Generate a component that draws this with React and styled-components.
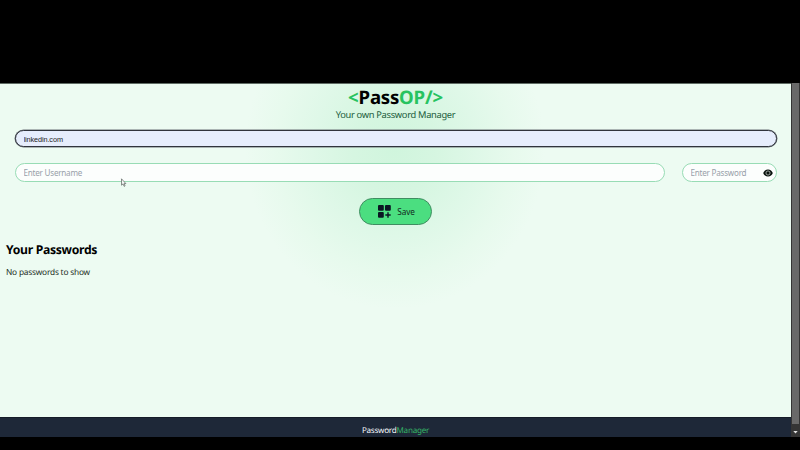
import React from "react";
import styled, { createGlobalStyle } from "styled-components";

const GlobalStyle = createGlobalStyle`
  * { box-sizing: border-box; }
  body { margin: 0; background: #000; overflow: hidden; }
  h1, h2, p { margin: 0; }
`;

const Screen = styled.div`
  width: 800px;
  height: 450px;
  padding: 83px 0 13px;
  display: flex;
  background: #000;
  font-family: "Noto Sans", "Open Sans", sans-serif;
  color: #000;
  text-rendering: geometricPrecision;
`;

const Page = styled.div`
  position: relative;
  width: 791px;
  height: 354px;
  border-top: 1px solid #5f6b64;
  display: flex;
  flex-direction: column;
  background: radial-gradient(ellipse 150px 160px at 395px 65px, #d0f5dd 0%, #d6f6e1 28%, #dff8e8 55%, #e7faed 78%, #edfbf2 100%);
`;

const Main = styled.main`
  flex: 1;
  display: flex;
  flex-direction: column;
`;

const Title = styled.h1`
  margin-top: 3px;
  height: 21px;
  line-height: 21px;
  text-align: center;
  font-size: 18.6px;
  font-weight: 700;
  letter-spacing: -0.2px;
`;

const Accent = styled.span`
  color: ${(p) => p.$color || "#27c360"};
`;

const Tagline = styled.p`
  height: 14px;
  line-height: 13px;
  text-align: center;
  font-size: 9.3px;
  letter-spacing: -0.3px;
  color: #205c3b;
`;

const Form = styled.form`
  display: flex;
  flex-direction: column;
  align-items: center;
  gap: 16px;
  padding: 7px 0 0;
`;

const Row = styled.div`
  width: 762px;
  display: flex;
  gap: 17px;
`;

const Field = styled.div`
  width: ${(p) => p.$width}px;
  height: ${(p) => (p.$active ? 17 : 19)}px;
  margin-top: ${(p) => (p.$active ? 1 : 0)}px;
  padding: 0 3px 0 8px;
  display: flex;
  align-items: center;
  justify-content: space-between;
  border: 1px solid ${(p) => (p.$active ? "#30343c" : "#98dcb5")};
  box-shadow: ${(p) => (p.$active ? "0 0 0 0.5px #6a7076" : "none")};
  border-radius: 10px;
  background: ${(p) => (p.$active ? "#e6edfc" : "#fcfefd")};
  svg { display: block; flex: none; }
`;

const Input = styled.input`
  flex: 1;
  min-width: 0;
  height: 14px;
  padding: ${(p) => (p.$plain ? "1px 0 0" : "0")};
  border: 0;
  outline: 0;
  background: transparent;
  color: #222;
  font-family: ${(p) => (p.$plain ? '"Liberation Sans", sans-serif' : "inherit")};
  font-size: ${(p) => (p.$plain ? 7.3 : 8.1)}px;
  letter-spacing: ${(p) => (p.$plain ? -0.1 : -0.23)}px;
  &::placeholder { color: #98a0a9; opacity: 1; }
`;

const SaveButton = styled.button`
  width: 73px;
  height: 27px;
  padding: 0 0 0 2px;
  display: flex;
  align-items: center;
  justify-content: center;
  gap: 6px;
  border: 1px solid #408d61;
  border-radius: 14px;
  background: #4bde80;
  color: #12291d;
  font: 8.2px "Noto Sans", sans-serif;
  letter-spacing: -0.15px;
`;

const Section = styled.section`
  padding: 16px 6px 0;
`;

const Heading = styled.h2`
  height: 17px;
  line-height: 17px;
  font-size: 12.2px;
  font-weight: 700;
  letter-spacing: -0.3px;
`;

const Empty = styled.p`
  margin-top: 8px;
  height: 14px;
  line-height: 14px;
  font-size: 8.3px;
  letter-spacing: -0.2px;
  color: #1b2c22;
`;

const Footer = styled.footer`
  height: 20px;
  padding-top: 7px;
  border-top: 1px solid #151c28;
  background: #1e2838;
  color: #f5f7fa;
  text-align: center;
  font-size: 8.1px;
  letter-spacing: -0.25px;
  line-height: 12px;
`;

const Scrollbar = styled.div`
  width: 9px;
  height: 354px;
  display: flex;
  flex-direction: column;
  align-items: center;
  background: #353535;
`;

const Thumb = styled.div`
  width: 7px;
  height: 341px;
  background: #696969;
`;

const Pointer = styled.svg`
  position: absolute;
  left: 119.5px;
  top: 94px;
`;

const Eye = () => (
  <svg width="10" height="10" viewBox="0 0 24 24">
    <path d="M12 3.5C6.500 3.500 2.200 7.200.500 12c1.700 4.800 6 8.500 11.500 8.500s9.800-3.700 11.500-8.500C21.800 7.200 17.500 3.500 12 3.500Z" fill="#07100b" />
    <circle cx="12" cy="12" r="5" fill="none" stroke="#cbd2ce" strokeWidth="1.800" />
  </svg>
);

const GridPlus = () => (
  <svg width="13" height="13" viewBox="0 0 13 13" fill="#0b1723">
    <rect width="5.800" height="5.800" rx="1" />
    <rect x="7" width="5.800" height="5.800" rx="1" />
    <rect y="7" width="5.800" height="5.800" rx="1" />
    <path d="M9.300 7.300h1.400v2h2v1.400h-2v2H9.300v-2h-2V9.300h2Z" />
  </svg>
);

export default function App() {
  return (
    <>
      <GlobalStyle />
      <Screen>
        <Page>
          <Main>
            <Title>
              <Accent>&lt;</Accent>Pass<Accent>OP/&gt;</Accent>
            </Title>
            <Tagline>Your own Password Manager</Tagline>
            <Form>
              <Row>
                <Field $width={762} $active>
                  <Input $plain defaultValue="linkedin.com" />
                </Field>
              </Row>
              <Row>
                <Field $width={650}>
                  <Input placeholder="Enter Username" />
                </Field>
                <Field $width={95}>
                  <Input placeholder="Enter Password" />
                  <Eye />
                </Field>
              </Row>
              <SaveButton type="button">
                <GridPlus />
                Save
              </SaveButton>
            </Form>
            <Section>
              <Heading>Your Passwords</Heading>
              <Empty>No passwords to show</Empty>
            </Section>
          </Main>
          <Footer>
            Password<Accent $color="#35b366">Manager</Accent>
          </Footer>
          <Pointer width="7" height="9" viewBox="0 0 6 9">
            <path d="M1 .8v6.400l1.500-1.300 1.200 2.500.9-.5-1.100-2.300h1.900Z" fill="#f5f8f6" stroke="#59605c" strokeWidth=".7" />
          </Pointer>
        </Page>
        <Scrollbar>
          <Thumb />
          <svg width="7" height="13" viewBox="0 0 7 13">
            <path d="M1.300 7h4.400L3.500 9.500Z" fill="#e4e4e4" />
          </svg>
        </Scrollbar>
      </Screen>
    </>
  );
}
